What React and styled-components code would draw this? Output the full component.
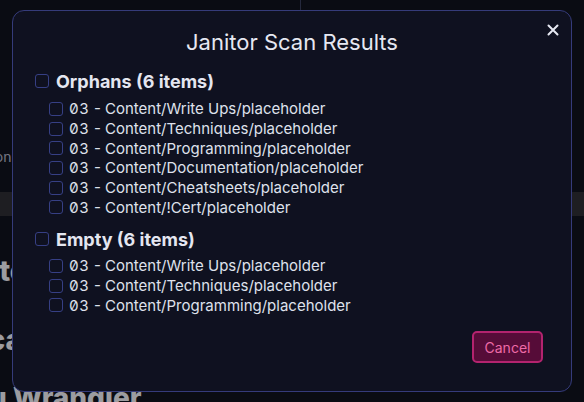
import React from "react";
import styled, { createGlobalStyle } from "styled-components";

const Global = createGlobalStyle`
  html, body { margin: 0; padding: 0; }
  body {
    background: #11141f;
    font-family: Inter, "Noto Sans", sans-serif;
    overflow: hidden;
  }
  * { box-sizing: border-box; }
`;

/* ---------- background page (dimmed behind the dialog) ---------- */
const Page = styled.div`
  width: 584px;
  height: 402px;
  display: flex;
  flex-direction: column;
  overflow: hidden;
`;

const TopBar = styled.div`
  display: grid;
  grid-template-columns: 300px 1fr;
  height: 44px;
  flex-shrink: 0;
`;

const TopPane = styled.div`
  border-left: ${(p) => (p.$divider ? "1px solid #3b4060" : "none")};
`;

const SmallText = styled.div`
  font-size: 14px;
  line-height: 20px;
  color: #b5b9cc;
  white-space: nowrap;
  margin: 103px 0 0 ${(p) => p.$shift}px;
`;

const GreyBar = styled.div`
  height: 24px;
  background: #303036;
  margin-top: 25px;
  flex-shrink: 0;
`;

const BigText = styled.div`
  font-size: 28px;
  font-weight: 800;
  line-height: 34px;
  color: #f4f5fa;
  white-space: nowrap;
  margin: ${(p) => p.$top}px 0 0 ${(p) => p.$shift}px;
`;

/* ---------- dialog ---------- */
const Overlay = styled.div`
  position: fixed;
  inset: 0;
  background: rgba(0, 0, 0, 0.36);
  display: flex;
  align-items: center;
  justify-content: center;
`;

const Dialog = styled.div`
  position: relative;
  width: 560px;
  height: 382px;
  background: #0f1120;
  border: 1px solid #353b7a;
  border-radius: 12px;
  padding: 18px 28px 28px 21px;
  display: flex;
  flex-direction: column;
  color: #e2e4ee;
`;

const Title = styled.h2`
  margin: 0 0 14px 7px;
  font-size: 22px;
  font-weight: 400;
  line-height: 26px;
  text-align: center;
  color: #e6e8f2;
`;

const CloseButton = styled.button`
  position: absolute;
  top: 12px;
  right: 11px;
  width: 14px;
  height: 14px;
  padding: 0;
  border: none;
  background: transparent;
  color: #e6e8f2;
  display: flex;
  align-items: center;
  justify-content: center;
  cursor: pointer;
`;

const Sections = styled.div`
  display: flex;
  flex-direction: column;
  gap: 10px;
`;

const Section = styled.div`
  display: flex;
  flex-direction: column;
`;

const Check = styled.input.attrs({ type: "checkbox" })`
  appearance: none;
  -webkit-appearance: none;
  margin: 0;
  width: 14px;
  height: 14px;
  flex-shrink: 0;
  border: 1.5px solid #363f84;
  border-radius: 3px;
  background: transparent;
`;

const GroupHeader = styled.label`
  display: flex;
  align-items: center;
  gap: 7px;
  height: 24px;
  padding-left: 1px;
  font-size: 18px;
  font-weight: 700;
  color: #e4e6f0;
`;

const ItemList = styled.div`
  display: flex;
  flex-direction: column;
  margin-top: ${(p) => p.$gap}px;
  padding-left: 15px;
`;

const Item = styled.label`
  display: flex;
  align-items: center;
  gap: 6px;
  height: 19.7px;
  font-size: 15px;
  color: #dfe1ec;
  white-space: nowrap;
`;

const Num = styled.span`
  font-feature-settings: "zero" 1, "tnum" 1;
  letter-spacing: 0.6px;
`;

const Footer = styled.div`
  margin-top: auto;
  display: flex;
  justify-content: flex-end;
`;

const CancelButton = styled.button`
  height: 32px;
  width: 71px;
  padding: 0;
  border: 2px solid #b3236e;
  border-radius: 5px;
  background: #560c38;
  color: #ee6aa7;
  font-family: Inter, sans-serif;
  font-size: 14px;
  cursor: pointer;
`;

const groups = [
  {
    name: "Orphans",
    gap: 6,
    items: [
      "Content/Write Ups/placeholder",
      "Content/Techniques/placeholder",
      "Content/Programming/placeholder",
      "Content/Documentation/placeholder",
      "Content/Cheatsheets/placeholder",
      "Content/!Cert/placeholder",
    ],
  },
  {
    name: "Empty",
    gap: 5,
    items: [
      "Content/Write Ups/placeholder",
      "Content/Techniques/placeholder",
      "Content/Programming/placeholder",
    ],
  },
];

export default function App() {
  return (
    <>
      <Global />
      <Page>
        <TopBar>
          <TopPane />
          <TopPane $divider />
        </TopBar>
        <SmallText $shift={-64}>Automation</SmallText>
        <GreyBar />
        <BigText $top={38} $shift={-27}>Site</BigText>
        <BigText $top={35} $shift={-30}>Scan</BigText>
        <BigText $top={24} $shift={-72}>Menu Wrangler</BigText>
      </Page>
      <Overlay>
        <Dialog role="dialog">
          <Title>Janitor Scan Results</Title>
          <CloseButton aria-label="Close">
            <svg width="12" height="12" viewBox="0 0 12 12">
              <path
                d="M1.5 1.5 L10.5 10.5 M10.5 1.5 L1.5 10.5"
                stroke="currentColor"
                strokeWidth="2"
                strokeLinecap="round"
              />
            </svg>
          </CloseButton>
          <Sections>
            {groups.map((g) => (
              <Section key={g.name}>
                <GroupHeader>
                  <Check />
                  {g.name} ({6} items)
                </GroupHeader>
                <ItemList $gap={g.gap}>
                  {g.items.map((it) => (
                    <Item key={it}>
                      <Check />
                      <span>
                        <Num>03</Num> - {it}
                      </span>
                    </Item>
                  ))}
                </ItemList>
              </Section>
            ))}
          </Sections>
          <Footer>
            <CancelButton>Cancel</CancelButton>
          </Footer>
        </Dialog>
      </Overlay>
    </>
  );
}
